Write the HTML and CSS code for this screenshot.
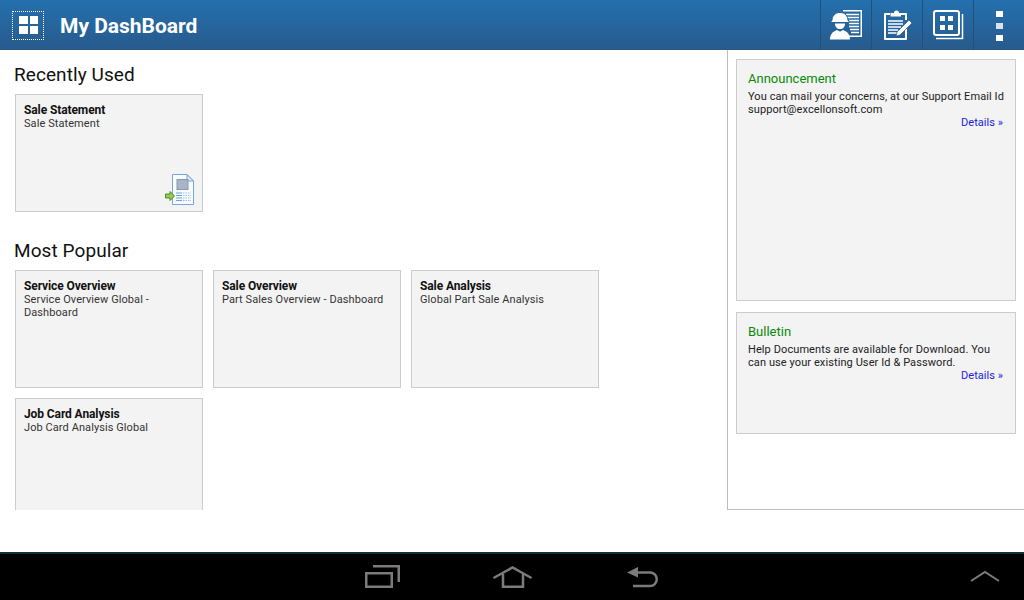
FILE: index.html
```html
<!DOCTYPE html>
<html>
<head>
    <title>My DashBoard</title>
    <link rel="stylesheet" href="styles.css">
</head>
<body>
    <div class="header">
        <div class="menu-btn">
            <svg width="19" height="18" viewBox="0 0 19 18" fill="#fff">
                <rect x="0" y="0" width="9" height="8"/>
                <rect x="11" y="0" width="8" height="8"/>
                <rect x="0" y="10" width="9" height="8"/>
                <rect x="11" y="10" width="8" height="8"/>
            </svg>
        </div>
        <div class="title">My DashBoard</div>
        <div class="actions">
            <div class="action">
                <svg width="34" height="32" viewBox="0 0 34 32">
                    <path d="M14 1.750H32.250V27.250H20" fill="none" stroke="#fff" stroke-width="1.500"/>
                    <path d="M17 5.500h13M17 8.500h13M19 11.500h11M20 14.500h10M20 17.500h10M21 20.500h9M22 23.500h8" stroke="#fff" stroke-width="1.600"/>
                    <path d="M3 11.500C3 7 6 3.500 11 3.500S19 7 19 11.500h1v2H2v-2z" fill="#fff" stroke="#245f96"/>
                    <path d="M6 14.500h10c0 3.500-2 5.500-5 5.500s-5-2-5-5.500z" fill="#fff"/>
                    <path d="M1 30.500c0-5 2.500-8 7-9.500l3 1.500 3-1.500c4.500 1.500 7 4.500 7 9.500z" fill="#fff"/>
                </svg>
            </div>
            <div class="action">
                <svg width="30" height="32" viewBox="0 0 30 32">
                    <path d="M8 5H3V30H24V20M24 11V5H19" fill="none" stroke="#fff" stroke-width="2" stroke-linejoin="round"/>
                    <path d="M8.500 7.500V4h3.500a2.500 2.500 0 0 1 5 0h2v3.500z" fill="#fff"/>
                    <path d="M6 12h15M6 15h15M6 18h13M6 21h10M6 24h9" stroke="#fff" stroke-width="1.300"/>
                    <path d="M14 27l1-4L27 11l3 3L18 26z" fill="#fff" stroke="#24598c" stroke-width=".7"/>
                </svg>
            </div>
            <div class="action">
                <svg width="32" height="30" viewBox="0 0 32 30">
                    <rect x="2" y="1" width="25" height="24" rx="2" fill="none" stroke="#fff" stroke-width="2"/>
                    <path d="M30.500 4V28.500H4" fill="none" stroke="#fff" stroke-width="1.500"/>
                    <g fill="#fff">
                        <rect x="8" y="6" width="5" height="5"/>
                        <rect x="16" y="6" width="5" height="5"/>
                        <rect x="8" y="15" width="5" height="5"/>
                        <rect x="16" y="15" width="5" height="5"/>
                    </g>
                </svg>
            </div>
            <div class="action action-more">
                <span class="dot"></span>
                <span class="dot dot-mid"></span>
                <span class="dot"></span>
            </div>
        </div>
    </div>

    <div class="main">
        <div class="content">
            <h2 class="section-title">Recently Used</h2>
            <div class="tiles">
                <div class="tile">
                    <div class="tile-name">Sale Statement</div>
                    <div class="tile-desc">Sale Statement</div>
                    <svg class="tile-icon" width="32" height="32" viewBox="0 0 32 32">
                        <path d="M9.500 .500H24l6.500 6.500V30.500H9.500z" fill="#f8fbff" stroke="#7aa5da"/>
                        <path d="M24 .500V7h6.500z" fill="#dfeaf7" stroke="#7aa5da"/>
                        <rect x="14" y="5.500" width="11" height="10" fill="#a8b4c8" stroke="#8c99ae"/>
                        <path d="M13 19h6M13 21.500h6M13 24h6M13 26.500h6" stroke="#6f9fd8"/>
                        <path d="M20 19h8M20 21.500h8M20 24h8M20 26.500h8" stroke="#9dbde2" stroke-dasharray="1.500 1"/>
                        <path d="M2.500 20h4.500V17.500l4.500 4.500-4.500 4.500V24H2.500z" fill="#96cc5a" stroke="#4f8a1f"/>
                    </svg>
                </div>
            </div>

            <h2 class="section-title section-popular">Most Popular</h2>
            <div class="tiles">
                <div class="tile">
                    <div class="tile-name">Service Overview</div>
                    <div class="tile-desc">Service Overview Global - Dashboard</div>
                </div>
                <div class="tile">
                    <div class="tile-name">Sale Overview</div>
                    <div class="tile-desc">Part Sales Overview - Dashboard</div>
                </div>
                <div class="tile">
                    <div class="tile-name">Sale Analysis</div>
                    <div class="tile-desc">Global Part Sale Analysis</div>
                </div>
                <div class="tile">
                    <div class="tile-name">Job Card Analysis</div>
                    <div class="tile-desc">Job Card Analysis Global</div>
                </div>
            </div>
        </div>

        <div class="side">
            <div class="notice notice-announce">
                <div class="notice-title">Announcement</div>
                <div class="notice-text">You can mail your concerns, at our Support Email Id support@excellonsoft.com</div>
                <a class="notice-link" href="#">Details »</a>
            </div>
            <div class="notice notice-bulletin">
                <div class="notice-title">Bulletin</div>
                <div class="notice-text">Help Documents are available for Download. You can use your existing User Id &amp; Password.</div>
                <a class="notice-link" href="#">Details »</a>
            </div>
        </div>
    </div>

    <div class="spacer"></div>

    <div class="navbar">
        <svg class="nav-recent" width="36" height="24" viewBox="0 0 36 24" fill="none" stroke="#7b7b7b" stroke-width="2.500">
            <rect x="2.250" y="8.250" width="25.500" height="13.500"/>
            <path d="M9 1.250H34.750V17"/>
        </svg>
        <svg class="nav-home" width="41" height="24" viewBox="0 0 41 24" fill="none" stroke="#7b7b7b" stroke-width="2.500">
            <path d="M1.500 13L20.500 2.500l19 10.500"/>
            <path d="M11 9V21.750H31V9"/>
        </svg>
        <svg class="nav-back" width="32" height="22" viewBox="0 0 32 22" fill="none" stroke="#7b7b7b" stroke-width="2.500">
            <path d="M8 5.500H23a6.750 6.750 0 0 1 0 13.500H6"/>
            <path d="M0 5.500L11 0V10.500z" fill="#7b7b7b" stroke="none"/>
        </svg>
        <svg class="nav-up" width="30" height="12" viewBox="0 0 30 12" fill="none" stroke="#7b7b7b" stroke-width="2">
            <path d="M1 11L15 2l14 9"/>
        </svg>
    </div>
</body>
</html>
```

FILE: styles.css
```css
* {
    box-sizing: border-box;
}

html, body {
    margin: 0;
    padding: 0;
}

body {
    width: 1024px;
    height: 600px;
    overflow: hidden;
    display: flex;
    flex-direction: column;
    background-color: #fff;
    font-family: Roboto, "Liberation Sans", sans-serif;
    color: #222;
}

/* top bar */
.header {
    height: 50px;
    flex-shrink: 0;
    display: flex;
    align-items: center;
    background: linear-gradient(#2470ae, #285a8c);
}

.menu-btn {
    width: 32px;
    height: 29px;
    margin-left: 12px;
    border: 1px dotted #fff;
    display: flex;
    align-items: center;
    justify-content: center;
}

.title {
    margin-left: 16px;
    padding-top: 2px;
    color: #fff;
    font-size: 21px;
    font-weight: 700;
}

.actions {
    margin-left: auto;
    display: flex;
    height: 50px;
}

.action {
    width: 51px;
    border-left: 1px solid #234f7d;
    display: flex;
    align-items: center;
    justify-content: center;
}

.action-more {
    flex-direction: column;
    gap: 6px;
    padding-top: 1px;
}

.dot {
    width: 7px;
    height: 6px;
    background-color: #fff;
}

.dot-mid {
    background-color: #d8e2ec;
}

/* main area */
.main {
    height: 460px;
    flex-shrink: 0;
    display: flex;
    overflow: hidden;
}

.content {
    width: 727px;
    padding: 13px 0 0 15px;
}

.section-title {
    margin: 0 0 8px -1px;
    font-size: 19px;
    font-weight: 400;
    line-height: 23px;
    letter-spacing: 0.08px;
    color: #111;
}

.section-popular {
    margin-top: 27px;
}

.tiles {
    display: flex;
    flex-wrap: wrap;
    gap: 10px;
    width: 600px;
}

.tile {
    position: relative;
    width: 188px;
    height: 118px;
    padding: 8px;
    background-color: #f3f3f3;
    border: 1px solid #ccc;
}

.tile-name {
    font-size: 12px;
    font-weight: 700;
    line-height: 14px;
    letter-spacing: -0.1px;
    color: #111;
}

.tile-desc {
    font-size: 11px;
    line-height: 13px;
    letter-spacing: 0.08px;
    color: #333;
}

.tile-icon {
    position: absolute;
    right: 7px;
    bottom: 5px;
}

/* right panel */
.side {
    width: 297px;
    border-left: 1px solid #bdbdbd;
    border-bottom: 1px solid #bdbdbd;
    padding: 9px 8px 0 8px;
    display: flex;
    flex-direction: column;
    gap: 11px;
}

.notice {
    padding: 11px 12px 0 11px;
    background-color: #f3f3f3;
    border: 1px solid #ccc;
}

.notice-announce {
    height: 242px;
}

.notice-bulletin {
    height: 122px;
}

.notice-title {
    font-size: 13px;
    line-height: 16px;
    color: #0a8a0a;
    margin-bottom: 3px;
}

.notice-text {
    margin-right: -4px;
    font-size: 11px;
    line-height: 13px;
    letter-spacing: 0.09px;
    color: #222;
}

.notice-link {
    display: block;
    text-align: right;
    font-size: 11px;
    line-height: 13px;
    letter-spacing: 0.05px;
    color: #1a1ae6;
    text-decoration: none;
}

.spacer {
    flex: 1;
}

/* android nav bar */
.navbar {
    position: relative;
    height: 48px;
    flex-shrink: 0;
    background-color: #000;
    border-top: 2px solid #0f2f40;
}

.navbar svg {
    position: absolute;
}

.nav-recent {
    left: 364px;
    top: 11px;
}

.nav-home {
    left: 492px;
    top: 11px;
}

.nav-back {
    left: 627px;
    top: 13px;
}

.nav-up {
    left: 970px;
    top: 16px;
}
```
